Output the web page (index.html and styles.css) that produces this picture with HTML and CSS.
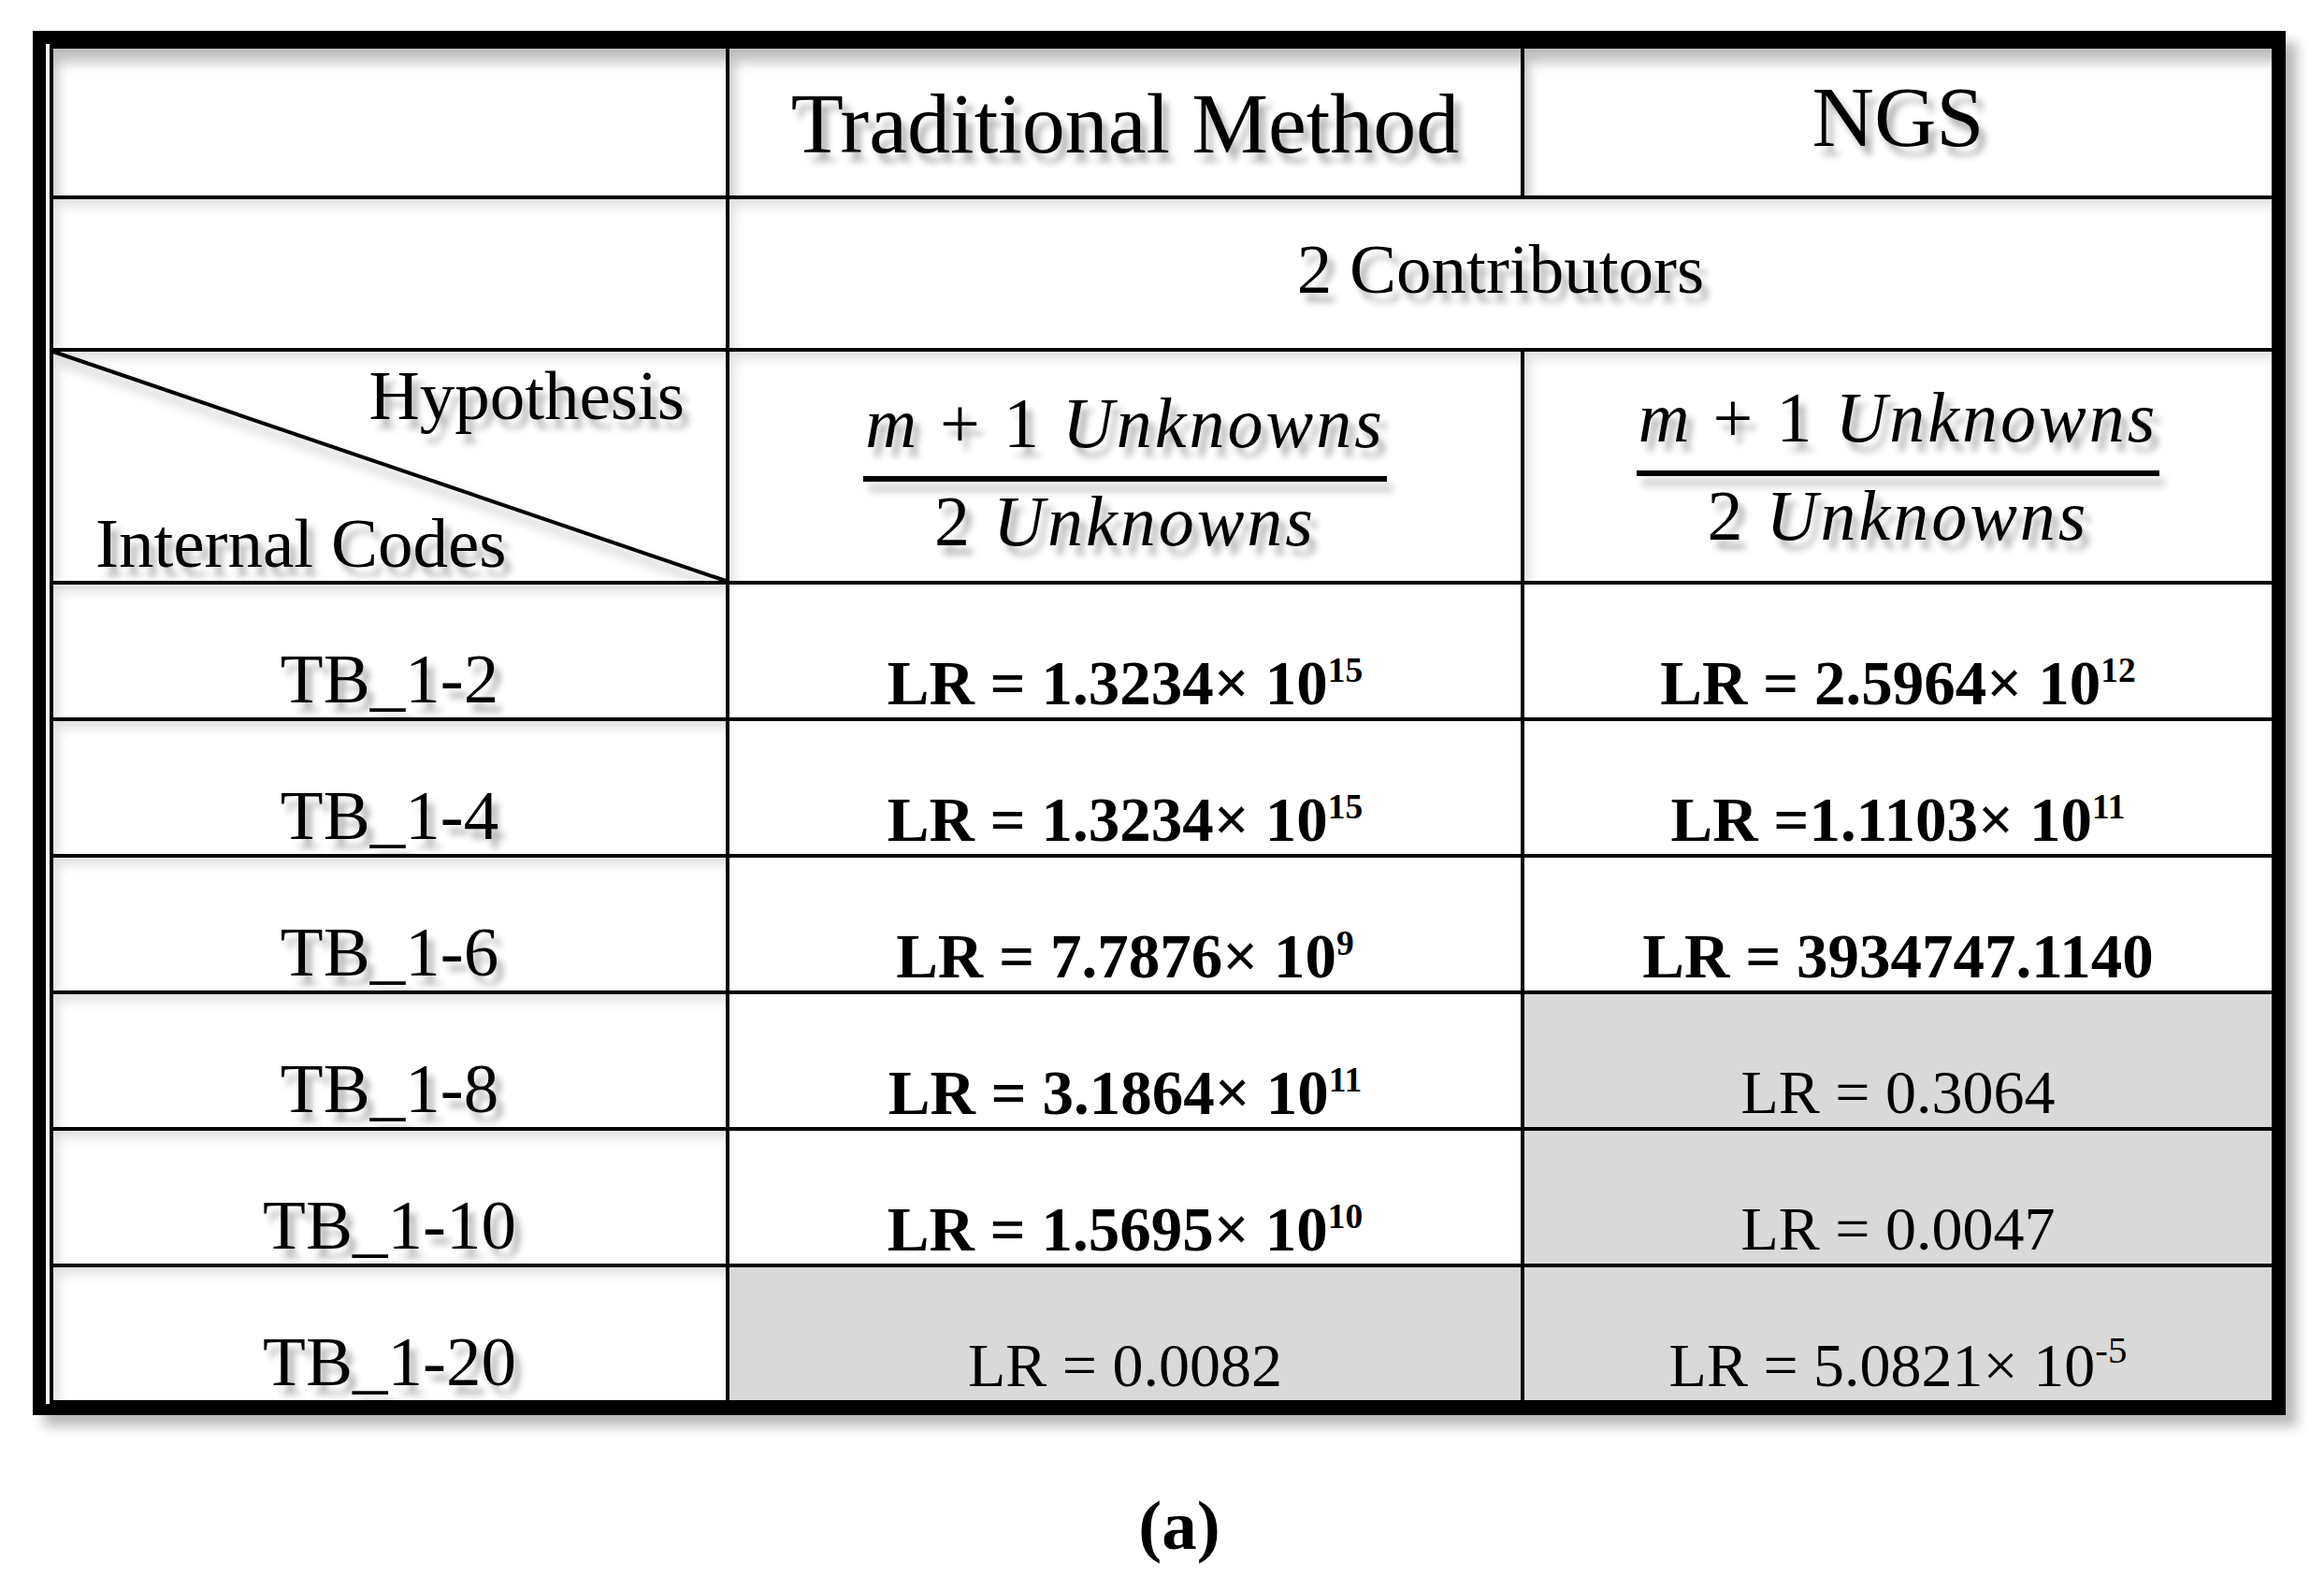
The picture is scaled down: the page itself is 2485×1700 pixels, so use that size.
FILE: index.html
```html
<!DOCTYPE html>
<html>
<head>
<meta charset="utf-8">
<link rel="stylesheet" href="styles.css">
</head>
<body>
<div class="page">
  <div class="frame">
    <div class="grid">
      <div class="cell hd top"></div>
      <div class="cell hd top title ts">Traditional Method</div>
      <div class="cell hd top title ngs ts">NGS</div>

      <div class="cell hd"></div>
      <div class="cell hd span2 contrib ts">2 Contributors</div>

      <div class="cell hd corner">
        <svg class="diag" viewBox="0 0 100 100" preserveAspectRatio="none"><line x1="0" y1="0" x2="100" y2="100" stroke="#000" stroke-width="4" vector-effect="non-scaling-stroke"/></svg>
        <span class="hyp ts">Hypothesis</span>
        <span class="codes ts">Internal Codes</span>
      </div>
      <div class="cell hd fraccell trad">
        <div class="frac">
          <div class="num ts"><i>m</i> + 1 <i>Unknowns</i></div>
          <div class="bar"></div>
          <div class="den ts">2 <i>Unknowns</i></div>
        </div>
      </div>
      <div class="cell hd fraccell">
        <div class="frac">
          <div class="num ts"><i>m</i> + 1 <i>Unknowns</i></div>
          <div class="bar"></div>
          <div class="den ts">2 <i>Unknowns</i></div>
        </div>
      </div>

      <div class="cell hd code ts">TB_1-2</div>
      <div class="cell lr b"><span class="val">LR = 1.3234× 10<span class="sup">15</span></span></div>
      <div class="cell lr b"><span class="val">LR = 2.5964× 10<span class="sup">12</span></span></div>

      <div class="cell hd code ts">TB_1-4</div>
      <div class="cell lr b"><span class="val">LR = 1.3234× 10<span class="sup">15</span></span></div>
      <div class="cell lr b"><span class="val">LR =1.1103× 10<span class="sup">11</span></span></div>

      <div class="cell hd code ts">TB_1-6</div>
      <div class="cell lr b"><span class="val">LR = 7.7876× 10<span class="sup">9</span></span></div>
      <div class="cell lr b"><span class="val">LR = 3934747.1140</span></div>

      <div class="cell hd code ts">TB_1-8</div>
      <div class="cell lr b"><span class="val">LR = 3.1864× 10<span class="sup">11</span></span></div>
      <div class="cell lr gray"><span class="val">LR = 0.3064</span></div>

      <div class="cell hd code ts">TB_1-10</div>
      <div class="cell lr b"><span class="val">LR = 1.5695× 10<span class="sup">10</span></span></div>
      <div class="cell lr gray"><span class="val">LR = 0.0047</span></div>

      <div class="cell hd code ts">TB_1-20</div>
      <div class="cell lr gray"><span class="val">LR = 0.0082</span></div>
      <div class="cell lr gray"><span class="val">LR = 5.0821× 10<span class="sup neg">-5</span></span></div>
    </div>
  </div>
  <div class="caption">(a)</div>
</div>
</body>
</html>
```

FILE: styles.css
```css
html, body {
  margin: 0;
  padding: 0;
  background: #ffffff;
}

body {
  font-family: "Liberation Serif", "Times New Roman", serif;
  color: #000;
}

.page {
  width: 2485px;
  height: 1700px;
  overflow: hidden;
}

.frame {
  box-sizing: border-box;
  width: 2409px;
  margin: 33px 0 0 35px;
  border-style: solid;
  border-color: #000;
  border-width: 14px 11px 12px 14px;
  padding-left: 4px;
  background: #fff;
  box-shadow: 12px 12px 12px rgba(0, 0, 0, 0.28);
}

.grid {
  display: grid;
  grid-template-columns: 719px 846px 799px;
  grid-template-rows: 157px 159px 245px repeat(6, 142px);
  gap: 4px;
  background: #000;
  border: 4px solid #000;
  border-top-width: 5px;
}

.cell {
  background: #fff;
  display: flex;
  justify-content: center;
  align-items: center;
  position: relative;
  box-sizing: border-box;
  line-height: 1;
  white-space: nowrap;
}

.hd {
  box-shadow: inset 12px 14px 14px -8px rgba(0, 0, 0, 0.14);
}

.top {
  box-shadow: inset 12px 22px 14px -8px rgba(0, 0, 0, 0.26);
}

.ts {
  text-shadow: 7px 10px 7px rgba(0, 0, 0, 0.3);
}

.title {
  font-size: 92px;
  padding-top: 3px;
}

.ngs {
  padding-top: 0;
  padding-bottom: 12px;
}

.span2 {
  grid-column: span 2;
}

.contrib {
  font-size: 75px;
  padding-bottom: 10px;
}

.corner {
  flex-direction: column;
  justify-content: space-between;
  align-items: stretch;
  padding: 9px 44px 3px 45px;
  font-size: 75px;
}

.hyp {
  align-self: flex-end;
}

.codes {
  align-self: flex-start;
}

.diag {
  position: absolute;
  left: 0;
  top: 0;
  width: 100%;
  height: 100%;
  overflow: visible;
  filter: drop-shadow(7px 10px 6px rgba(0, 0, 0, 0.3));
}

.fraccell.trad {
  padding-top: 12px;
}

.frac {
  display: inline-flex;
  flex-direction: column;
  align-items: center;
  font-size: 76px;
  letter-spacing: 3px;
}

.num {
  padding: 0 2px 19px;
}

.bar {
  align-self: stretch;
  height: 6px;
  background: #000;
  box-shadow: 6px 10px 8px rgba(0, 0, 0, 0.25);
}

.den {
  margin-top: 4px;
}

.code {
  font-size: 75px;
  align-items: flex-end;
  padding-bottom: 4px;
}

.lr {
  font-size: 66px;
  align-items: flex-end;
  padding-bottom: 4px;
}

.lr.b {
  font-weight: bold;
  font-size: 67px;
  padding-bottom: 3px;
}

.val {
  display: block;
  line-height: 1;
}

.gray {
  background: #d9d9d9;
}

.sup {
  font-size: 0.56em;
  vertical-align: 0.64em;
  line-height: 0;
}

.sup.neg {
  font-size: 0.62em;
  vertical-align: 0.6em;
}

.caption {
  font-weight: bold;
  font-size: 75px;
  line-height: 1;
  text-align: center;
  margin-top: 80px;
  padding-left: 37px;
}
```
